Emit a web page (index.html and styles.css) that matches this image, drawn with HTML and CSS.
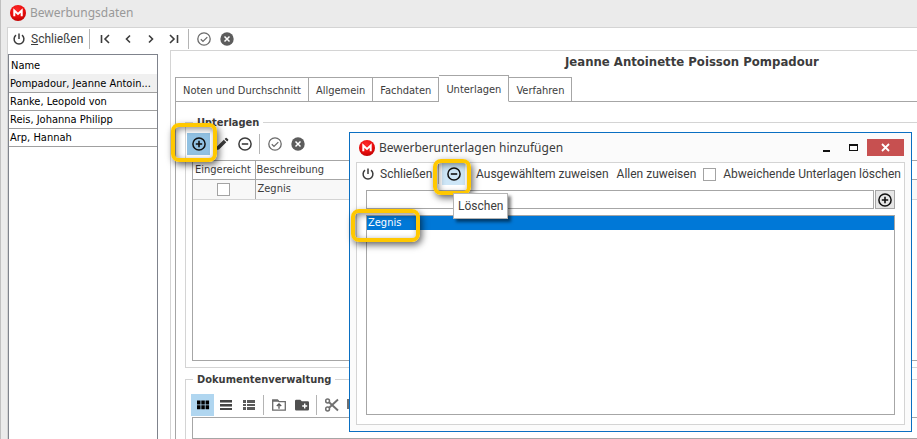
FILE: index.html
```html
<!DOCTYPE html>
<html lang="de">
<head>
<meta charset="utf-8">
<title>Bewerbungsdaten</title>
<link rel="stylesheet" href="styles.css">
</head>
<body>
<svg class="defs" aria-hidden="true">
  <defs>
    <radialGradient id="red" cx="0.45" cy="0.3" r="0.75"><stop offset="0" stop-color="#ff2a2a"/><stop offset="0.6" stop-color="#e80c0c"/><stop offset="1" stop-color="#b80000"/></radialGradient>
    <symbol id="logo" viewBox="0 0 16 16"><circle cx="8" cy="8" r="8" fill="url(#red)"/><path d="M4.3 11.2V5.6L8 9l3.700-3.400v5.600" fill="none" stroke="#fff" stroke-width="2"/></symbol>
    <symbol id="power" viewBox="0 0 16 16"><path d="M8 2.500v5.500M5 4.200a4.900 4.900 0 1 0 6 0" fill="none" stroke="currentColor" stroke-width="1.500"/></symbol>
    <symbol id="first" viewBox="0 0 16 16"><path d="M4.500 4v8M12 4L8 8l4 4" fill="none" stroke="currentColor" stroke-width="1.600"/></symbol>
    <symbol id="prev" viewBox="0 0 16 16"><path d="M10 4.500L6.500 8l3.500 3.500" fill="none" stroke="currentColor" stroke-width="1.600"/></symbol>
    <symbol id="next" viewBox="0 0 16 16"><path d="M6 4.500L9.500 8L6 11.500" fill="none" stroke="currentColor" stroke-width="1.600"/></symbol>
    <symbol id="last" viewBox="0 0 16 16"><path d="M11.500 4v8M4 4l4 4l-4 4" fill="none" stroke="currentColor" stroke-width="1.600"/></symbol>
    <symbol id="check" viewBox="0 0 16 16"><circle cx="8" cy="8" r="6.200" fill="none" stroke="#6a6a6a" stroke-width="1.300"/><path d="M4.800 8.200l2.200 2.200l4.300-4.300" fill="none" stroke="#6a6a6a" stroke-width="1.300"/></symbol>
    <symbol id="cancel" viewBox="0 0 16 16"><circle cx="8" cy="8" r="6.700" fill="#5c5c5c"/><path d="M5.500 5.500l5 5M10.500 5.500l-5 5" stroke="#fff" stroke-width="1.500"/></symbol>
    <symbol id="plus" viewBox="0 0 16 16"><circle cx="8" cy="8" r="6.100" fill="none" stroke="currentColor" stroke-width="1.500"/><path d="M8 4.800v6.400M4.800 8h6.400" stroke="currentColor" stroke-width="1.600"/></symbol>
    <symbol id="minus" viewBox="0 0 16 16"><circle cx="8" cy="8" r="6.100" fill="none" stroke="currentColor" stroke-width="1.500"/><path d="M4.800 8h6.400" stroke="currentColor" stroke-width="1.600"/></symbol>
    <symbol id="pencil" viewBox="0 0 16 16"><path d="M2 14l.5-3L9.800 3.700l2.500 2.500L5 13.500zM10.600 2.900l1-1a.8.8 0 0 1 1.100 0l1.400 1.400a.8.8 0 0 1 0 1.100l-1 1z" fill="currentColor"/></symbol>
    <symbol id="grid" viewBox="0 0 16 16"><path d="M2 3.500h3.500v4H2zM6.300 3.500h3.500v4H6.300zM10.600 3.500h3.500v4h-3.500zM2 8.300h3.500v4H2zM6.300 8.300h3.500v4H6.300zM10.600 8.300h3.500v4h-3.500z" fill="#000"/></symbol>
    <symbol id="rows" viewBox="0 0 16 16"><path d="M2 3h12v2H2zM2 7h12v2H2zM2 11h12v2H2z" fill="#444"/><path d="M2 5h12v1H2zM2 9h12v1H2z" fill="#999"/></symbol>
    <symbol id="list" viewBox="0 0 16 16"><path d="M2 3h3v3H2zM6 3h8v3H6zM2 7h3v2H2zM6 7h8v2H6zM2 10h3v3H2zM6 10h8v3H6z" fill="#5a5a5a"/></symbol>
    <symbol id="upload" viewBox="0 0 16 16"><path d="M1.700 3.200h5l1.300 1.500h6.300v8.500H1.700z" fill="none" stroke="#6b6b6b" stroke-width="1.300"/><path d="M1.200 2.600h5.500L8 4.800H1.200z" fill="#6b6b6b"/><path d="M8 11.800V7.500M5.800 9L8 6.800L10.200 9" fill="none" stroke="#555" stroke-width="1.300"/></symbol>
    <symbol id="folder" viewBox="0 0 16 16"><path d="M1 4a1.300 1.300 0 0 1 1.300-1.300h4L7.800 4.200h6A1.200 1.200 0 0 1 15 5.400v6.900a1.300 1.300 0 0 1-1.300 1.300H2.300A1.300 1.300 0 0 1 1 12.300z" fill="#505050"/><path d="M10.700 6.500v5M8.200 9h5" stroke="#fff" stroke-width="1.400"/></symbol>
    <symbol id="cut" viewBox="0 0 16 16"><g fill="none" stroke="#707070" stroke-width="1.500"><circle cx="3.600" cy="4" r="1.900"/><circle cx="3.600" cy="12" r="1.900"/><path d="M5.100 5.300L14 13.500M5.100 10.700L14 2.500" stroke-width="1.900"/></g></symbol>
    <symbol id="copy" viewBox="0 0 16 16"><path d="M1 12V3h9M4 6h9v8H4z" fill="none" stroke="#707070" stroke-width="2"/></symbol>
  </defs>
</svg>

<main class="window">
  <header class="titlebar"><svg class="logo"><use href="#logo"/></svg><h1>Bewerbungsdaten</h1></header>
  <div class="client">
    <div class="toolbar main-tools">
      <button class="labelled"><svg class="icon"><use href="#power"/></svg><span><u>S</u>chließen</span></button>
      <span class="sep"></span>
      <button class="tool" aria-label="Erster"><svg class="icon"><use href="#first"/></svg></button>
      <button class="tool" aria-label="Zurück"><svg class="icon"><use href="#prev"/></svg></button>
      <button class="tool" aria-label="Weiter"><svg class="icon"><use href="#next"/></svg></button>
      <button class="tool" aria-label="Letzter"><svg class="icon"><use href="#last"/></svg></button>
      <span class="sep"></span>
      <button class="tool" aria-label="Übernehmen"><svg class="icon"><use href="#check"/></svg></button>
      <button class="tool" aria-label="Abbrechen"><svg class="icon"><use href="#cancel"/></svg></button>
    </div>
    <div class="columns">
      <div class="names">
        <table>
          <thead><tr><th>Name</th></tr></thead>
          <tbody>
            <tr class="current"><td>Pompadour, Jeanne Antoin...</td></tr>
            <tr><td>Ranke, Leopold von</td></tr>
            <tr><td>Reis, Johanna Philipp</td></tr>
            <tr><td>Arp, Hannah</td></tr>
          </tbody>
        </table>
      </div>
      <section class="detail">
        <h2>Jeanne Antoinette Poisson Pompadour</h2>
        <div class="tabs" role="tablist">
          <button role="tab">Noten und Durchschnitt</button>
          <button role="tab">Allgemein</button>
          <button role="tab">Fachdaten</button>
          <button role="tab" class="active" aria-selected="true">Unterlagen</button>
          <button role="tab">Verfahren</button>
          <span class="rest"></span>
        </div>
        <div class="page">
          <section class="group documents">
            <h3>Unterlagen</h3>
            <div class="toolbar">
              <button class="tool pressed" aria-label="Hinzufügen"><svg class="icon"><use href="#plus"/></svg></button>
              <button class="tool" aria-label="Bearbeiten"><svg class="icon"><use href="#pencil"/></svg></button>
              <button class="tool" aria-label="Löschen"><svg class="icon"><use href="#minus"/></svg></button>
              <span class="sep"></span>
              <button class="tool" aria-label="Übernehmen"><svg class="icon"><use href="#check"/></svg></button>
              <button class="tool" aria-label="Abbrechen"><svg class="icon"><use href="#cancel"/></svg></button>
            </div>
            <div class="box">
              <table class="records">
                <thead><tr><th class="given">Eingereicht</th><th>Beschreibung</th></tr></thead>
                <tbody><tr><td class="given"><input type="checkbox" aria-label="Eingereicht"></td><td>Zegnis</td></tr></tbody>
              </table>
            </div>
          </section>
          <section class="group files">
            <h3>Dokumentenverwaltung</h3>
            <div class="toolbar">
              <button class="tool chosen" aria-label="Symbole"><svg class="icon"><use href="#grid"/></svg></button>
              <button class="tool" aria-label="Zeilen"><svg class="icon"><use href="#rows"/></svg></button>
              <button class="tool" aria-label="Liste"><svg class="icon"><use href="#list"/></svg></button>
              <span class="sep"></span>
              <button class="tool" aria-label="Hochladen"><svg class="icon"><use href="#upload"/></svg></button>
              <button class="tool" aria-label="Neuer Ordner"><svg class="icon"><use href="#folder"/></svg></button>
              <span class="sep"></span>
              <button class="tool" aria-label="Ausschneiden"><svg class="icon"><use href="#cut"/></svg></button>
              <button class="tool" aria-label="Kopieren"><svg class="icon"><use href="#copy"/></svg></button>
            </div>
            <div class="box"></div>
          </section>
        </div>
      </section>
    </div>
  </div>
</main>

<div class="mark mark-add"></div>

<div class="dialog" role="dialog" aria-labelledby="dialog-title">
  <header class="dialog-title">
    <svg class="logo"><use href="#logo"/></svg>
    <h2 id="dialog-title">Bewerberunterlagen hinzufügen</h2>
    <button class="caption" aria-label="Minimieren"><svg viewBox="0 0 9 9"><path d="M1 7h7v2H1z" fill="#111"/></svg></button>
    <button class="caption" aria-label="Maximieren"><svg viewBox="0 0 9 9"><path d="M0 1h9v7H0zM1 3v4h7V3z" fill="#111" fill-rule="evenodd"/></svg></button>
    <button class="caption close" aria-label="Schließen"><svg viewBox="0 0 9 9"><path d="M1 1l7 7M8 1L1 8" stroke="#fff" stroke-width="1.800"/></svg></button>
  </header>
  <div class="dialog-body">
    <div class="toolbar">
      <button class="labelled"><svg class="icon"><use href="#power"/></svg><span>Schließen</span></button>
      <span class="sep"></span>
      <button class="tool hover" aria-label="Löschen"><svg class="icon"><use href="#minus"/></svg></button>
      <button class="text">Ausgewähltem zuweisen</button>
      <button class="text">Allen zuweisen</button>
      <label><input type="checkbox">Abweichende Unterlagen löschen</label>
    </div>
    <div class="entry">
      <input type="text" aria-label="Neue Unterlage">
      <button aria-label="Hinzufügen"><svg class="icon"><use href="#plus"/></svg></button>
    </div>
    <ul class="choices"><li>Zegnis</li></ul>
  </div>
  <div class="mark mark-delete"></div>
  <div class="tooltip" role="tooltip">Löschen</div>
  <div class="mark mark-item"></div>
</div>
</body>
</html>
```
FILE: styles.css
```css
* { box-sizing: border-box; }
body {
  margin: 0;
  height: 100vh;
  overflow: hidden;
  font: 11px/14px "DejaVu Sans Condensed", "DejaVu Sans", sans-serif;
  color: #3c3c3c;
}
h1, h2, h3, ul { margin: 0; padding: 0; }
button {
  margin: 0;
  padding: 0;
  border: 0;
  background: none;
  color: inherit;
  font: inherit;
  white-space: nowrap;
}
.defs { position: absolute; width: 0; height: 0; }
.icon { display: block; width: 16px; height: 16px; flex: none; }
.logo { width: 16px; height: 16px; flex: none; }
input[type="checkbox"] {
  appearance: none;
  display: block;
  width: 13px;
  height: 13px;
  margin: 0;
  border: 1px solid #a3a3a3;
  background: #fff;
}

.window {
  display: flex;
  flex-direction: column;
  height: 100%;
  padding-left: 6px;
  border-left: 1px solid #c0c0c0;
  background: #ebebeb;
}
.titlebar { display: flex; align-items: center; gap: 4px; height: 27px; padding: 0 3px 2px; }
.titlebar h1 { font: 12px/18px "Noto Sans", "Open Sans", sans-serif; color: #999; }
.client {
  flex: 1;
  display: flex;
  flex-direction: column;
  min-height: 0;
  border-top: 1px solid #d4d4d4;
  border-left: 1px solid #d4d4d4;
  background: #fff;
}

.toolbar { display: flex; align-items: center; height: 22px; font: 12px/16px Roboto, "Open Sans", sans-serif; }
.tool { display: flex; align-items: center; justify-content: center; flex: none; width: 23px; height: 22px; }
.labelled { display: flex; align-items: center; gap: 4px; flex: none; width: 78px; padding-left: 3px; }
.sep { flex: none; width: 1px; height: 20px; margin: 0 3px; background: #b4b4b4; }
.pressed { background: #91c1e2; color: #111; }
.chosen { background: #b0d6f0; }
.hover { background: #cde6f7; color: #111; }

.columns { flex: 1; display: flex; min-height: 0; }
.names { flex: none; width: 150px; margin-top: 4px; border: 1px solid #7f838c; border-bottom: 0; color: #000; }
table { width: 100%; border-collapse: collapse; }
th, td { font-weight: normal; text-align: left; padding: 0; }
.names th { height: 19px; padding: 2px 0 0 2px; }
.names td { height: 18px; padding: 2px 0 0 1px; border-bottom: 1px solid #a0a0a0; white-space: nowrap; }
.names .current { background: #f0f0f0; }

.detail {
  flex: 1;
  display: flex;
  flex-direction: column;
  min-width: 0;
  margin-left: 12px;
  border-top: 1px solid #d4d4d4;
  border-left: 1px solid #d4d4d4;
}
.detail > h2 { padding: 3px 0 0 394px; font-size: 13px; line-height: 16px; white-space: nowrap; }
.tabs { display: flex; align-items: flex-end; height: 32px; padding-left: 4px; }
.tabs button { height: 25px; padding: 3px 7px 0; border: 1px solid #a6a6a6; border-left-width: 0; }
.tabs button:first-child { border-left-width: 1px; }
.tabs .active { height: 27px; border-bottom-color: #fff; }
.tabs .rest { flex: 1; border-bottom: 1px solid #a6a6a6; }
.page { flex: 1; display: flex; flex-direction: column; min-height: 0; margin-left: 4px; padding: 20px 0 0 9px; border-left: 1px solid #a6a6a6; }
.group { display: flex; flex-direction: column; border: 1px solid #d4d4d4; border-width: 1px 0 1px 1px; }
.group h3 { align-self: flex-start; margin: -8px 0 0 1px; padding: 0 4px; background: #fff; font-size: 11px; line-height: 16px; }
.group .box { flex: 1; border: 1px solid #a6a6a6; border-right: 0; }
.documents { height: 246px; padding: 0 0 6px 6px; }
.documents .toolbar { margin: 2px 0 5px -5px; }
.files { flex: 1; margin-top: 11px; padding-left: 6px; border-bottom: 0; }
.files .toolbar { margin: 6px 0 1px -1px; }
.records th { height: 18px; padding-left: 1px; border-bottom: 1px solid #a6a6a6; }
.records td { height: 20px; padding-left: 2px; border-bottom: 1px solid #d4d4d4; background: #f8f8f8; }
.records .given { width: 62px; padding: 0 2px; border-right: 1px solid #a6a6a6; }
.records input { margin: 0 auto; }

.dialog {
  position: absolute;
  left: 349px;
  right: 5px;
  top: 132px;
  padding: 0 6px 6px;
  border: 1px solid #0a6fc2;
  background: #fbfbfb;
}
.dialog-title { display: flex; align-items: center; height: 29px; padding: 0 1px 0 3px; }
.dialog-title h2 { flex: 1; margin-left: 4px; font: 12px/18px "Noto Sans", "Open Sans", sans-serif; }
.caption { display: flex; align-items: center; justify-content: center; width: 27px; height: 17px; }
.caption svg { width: 9px; height: 9px; }
.caption.close { width: 37px; background: #c75050; }
.dialog-body { padding: 0 9px 9px; border: 1px solid #d4d4d4; background: #fff; }
.dialog-body .toolbar { margin: 0 -9px; }
.text { margin-left: 8px; }
.hover + .text { margin-left: 11px; }
.toolbar label { display: flex; align-items: center; gap: 7px; margin-left: 7px; white-space: nowrap; }
.entry { display: flex; gap: 1px; margin-top: 5px; }
.entry input { flex: 1; min-width: 0; height: 19px; border: 1px solid #a6a6a6; padding: 0 2px; font: inherit; }
.entry button { display: flex; align-items: center; justify-content: center; width: 20px; height: 19px; border: 1px solid #a6a6a6; background: #e6e6e6; color: #111; }
.choices { height: 200px; margin-top: 6px; border: 1px solid #a6a6a6; list-style: none; }
.choices li { padding-left: 1px; background: #0078d7; color: #fff; }

.mark { position: absolute; border: 4px solid #ffc800; border-radius: 8px; box-shadow: 2px 3px 7px rgba(0, 0, 0, 0.6), inset 2px 2px 6px rgba(0, 0, 0, 0.45); }
.mark-add { left: 171px; top: 123px; width: 46px; height: 39px; }
.mark-delete { left: 83px; top: 26px; width: 38px; height: 36px; }
.mark-item { left: 1px; top: 76px; width: 69px; height: 33px; }
.tooltip {
  position: absolute;
  left: 103px;
  top: 60px;
  padding: 4px;
  border: 1px solid #b4b4b4;
  background: #fff;
  box-shadow: 3px 3px 3px rgba(0, 0, 0, 0.5);
  font: 12px/16px Roboto, "Open Sans", sans-serif;
}
```
